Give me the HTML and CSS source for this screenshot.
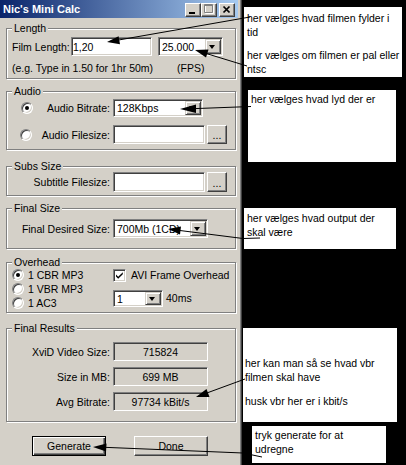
FILE: index.html
```html
<!DOCTYPE html>
<html lang="da">
<head>
    <meta charset="UTF-8">
    <meta name="viewport" content="width=device-width, initial-scale=1.0">
    <title>Nic's Mini Calc</title>
    <link rel="stylesheet" href="styles.css">
</head>
<body>
<div class="page">
    <div class="window">
        <div class="titlebar">
            <span class="title">Nic's Mini Calc</span>
            <div class="tbuttons">
                <span class="tbtn"><svg width="14" height="12" viewBox="0 0 14 12"><rect x="3" y="8" width="6" height="2" fill="#000"/></svg></span>
                <span class="tbtn"><svg width="14" height="12" viewBox="0 0 14 12"><g transform="translate(1 1)" fill="none" stroke="#fff"><path d="M2.5 0.5h8v8h-8z"/></g><g fill="none" stroke="#808080"><path d="M2.5 0.5h8v8h-8z M2 1.5h9"/></g></svg></span>
                <span class="tbtn close"><svg width="14" height="12" viewBox="0 0 14 12"><path d="M3.5 2.5l6 6M9.5 2.5l-6 6" stroke="#000" stroke-width="1.7"/></svg></span>
            </div>
        </div>

        <!-- Length -->
        <fieldset class="group g-length">
            <legend>Length</legend>
            <div class="len-row">
                <span class="len-label">Film Length:</span>
                <div class="field w-len">1,20</div>
                <div class="field combo w-fps"><span class="val">25.000</span><span class="drop"></span></div>
            </div>
            <div class="hint-row">
                <span class="hint-a">(e.g. Type in 1.50 for 1hr 50m)</span>
                <span>(FPS)</span>
            </div>
        </fieldset>

        <!-- Audio -->
        <fieldset class="group g-audio">
            <legend>Audio</legend>
            <div class="frow h18">
                <div class="lcol"><span class="radio on r-a1"></span><span class="ltext">Audio Bitrate:</span></div>
                <div class="field combo w90"><span class="val">128Kbps</span><span class="drop"></span></div>
            </div>
            <div class="frow h19 gap8">
                <div class="lcol"><span class="radio r-a2"></span><span class="ltext">Audio Filesize:</span></div>
                <div class="field w92"></div>
                <span class="btn dots">...</span>
            </div>
        </fieldset>

        <!-- Subs -->
        <fieldset class="group g-subs">
            <legend>Subs Size</legend>
            <div class="frow h20">
                <div class="lcol"><span class="ltext">Subtitle Filesize:</span></div>
                <div class="field w92"></div>
                <span class="btn dots">...</span>
            </div>
        </fieldset>

        <!-- Final Size -->
        <fieldset class="group g-final">
            <legend>Final Size</legend>
            <div class="frow h19">
                <div class="lcol"><span class="ltext">Final Desired Size:</span></div>
                <div class="field combo w95"><span class="val">700Mb (1CD)</span><span class="drop"></span></div>
            </div>
        </fieldset>

        <!-- Overhead -->
        <fieldset class="group g-over">
            <legend>Overhead</legend>
            <div class="over-grid">
                <div class="over-radios">
                    <div class="orow"><span class="radio on"></span><span>1 CBR MP3</span></div>
                    <div class="orow"><span class="radio"></span><span>1 VBR MP3</span></div>
                    <div class="orow"><span class="radio"></span><span>1 AC3</span></div>
                </div>
                <div class="over-right">
                    <div class="orow">
                        <span class="check"><svg width="9" height="9" viewBox="0 0 9 9"><path d="M1 3.5l2.2 2.3 4.6-4.6v2L3.2 7.8 1 5.5z" fill="#000"/></svg></span>
                        <span class="chk-text">AVI Frame Overhead</span>
                    </div>
                    <div class="ms-row">
                        <div class="field combo w50"><span class="val">1</span><span class="drop"></span></div>
                        <span class="ms">40ms</span>
                    </div>
                </div>
            </div>
        </fieldset>

        <!-- Final Results -->
        <fieldset class="group g-results">
            <legend>Final Results</legend>
            <div class="res-row">
                <span class="ltext">XviD Video Size:</span>
                <div class="field ro">715824</div>
            </div>
            <div class="res-row">
                <span class="ltext">Size in MB:</span>
                <div class="field ro">699 MB</div>
            </div>
            <div class="res-row">
                <span class="ltext">Avg Bitrate:</span>
                <div class="field ro">97734 kBit/s</div>
            </div>
        </fieldset>

        <div class="actions">
            <span class="btn push default">Generate</span>
            <span class="btn push">Done</span>
        </div>
    </div>

    <!-- noter -->
    <div class="note note-1">
        <p>her vælges hvad filmen fylder i<br>tid</p>
        <p class="next">her vælges om filmen er pal eller<br>ntsc</p>
    </div>
    <div class="note note-2"><p>her vælges hvad lyd der er</p></div>
    <div class="note note-3"><p>her vælges hvad output der<br>skal være</p></div>
    <div class="note note-4">
        <p>her kan man så se hvad vbr<br>filmen skal have</p>
        <p class="next2">husk vbr her er i kbit/s</p>
    </div>
    <div class="note note-5"><p>tryk generate for at<br>udregne</p></div>

    <svg class="arrows" width="406" height="465" viewBox="0 0 406 465">
        <g fill="none" stroke="#000" stroke-width="1">
            <polyline points="110,41.5 250,17"/>
            <polyline points="198,51 247,66"/>
            <polyline points="184,109 251,106.5"/>
            <polyline points="172,229.5 243,238.5 260,238"/>
            <polyline points="200,395.5 245,379"/>
            <polyline points="97,447 243,453 262,457"/>
        </g>
        <g fill="#000">
            <polygon points="107,42 120,44.2 118.6,36.2"/>
            <polygon points="195,50 206,57.5 208.5,49.5"/>
            <polygon points="180,109 196,113 196,104.5"/>
            <polygon points="168,229 180,234.5 181,226.5"/>
            <polygon points="196,397 209.5,397 206.5,389"/>
            <polygon points="93,447 106,451.5 106.5,443.5"/>
        </g>
    </svg>
</div>
</body>
</html>
```

FILE: styles.css
```css
body {
    margin: 0;
    background-color: #000000;
    font-family: "Liberation Sans", Arial, sans-serif;
    font-size: 10.5px;
    color: #000000;
}
.page {
    position: relative;
    width: 406px;
    height: 465px;
    overflow: hidden;
}
.window {
    width: 242px;
    height: 465px;
    box-sizing: border-box;
    background-color: #d4d0c8;
    border-right: 1px solid #404040;
    box-shadow: inset -1px 0 #808080;
    overflow: hidden;
}

/* title bar */
.titlebar {
    display: flex;
    justify-content: space-between;
    width: 238px;
    height: 18px;
    background: linear-gradient(to right, #0a246a, #a6caf0);
}
.title {
    color: #ffffff;
    font-weight: bold;
    font-size: 11px;
    line-height: 19px;
    padding-left: 3px;
}
.tbuttons {
    display: flex;
    align-items: flex-start;
    padding: 3px 3px 0 0;
}
.tbtn {
    display: block;
    width: 16px;
    height: 14px;
    box-sizing: border-box;
    background-color: #d4d0c8;
    border: 1px solid;
    border-color: #ffffff #404040 #404040 #ffffff;
    box-shadow: inset -1px -1px #808080;
}
.tbtn svg {
    display: block;
}
.tbtn.close {
    margin-left: 2px;
}

/* group boxes */
.group {
    margin: 0 0 0 6px;
    width: 230px;
    min-width: 0;
    box-sizing: border-box;
    padding: 0;
    border: 1px solid #808080;
    box-shadow: 1px 1px 0 #ffffff, inset 1px 1px 0 #ffffff;
}
.group legend {
    margin-left: 5px;
    padding: 0 2px;
    height: 12px;
    line-height: 12px;
    background-color: #d4d0c8;
}
.g-length { margin-top: 4px; padding: 3px 0 4px; }
.g-audio { margin-top: 6px; padding: 2px 0 5px; }
.g-subs { margin-top: 10px; padding: 0 0 3px; }
.g-final { margin-top: 6px; padding: 5px 0 10px; }
.g-over { margin-top: 7px; padding: 0 0 2px; }
.g-results { margin-top: 9px; padding: 8px 0 10px; }

/* controls */
.field {
    display: flex;
    align-items: center;
    box-sizing: border-box;
    height: 100%;
    background-color: #ffffff;
    border: 1px solid;
    border-color: #808080 #ffffff #ffffff #808080;
    box-shadow: inset 1px 1px #404040, inset -1px -1px #d4d0c8;
    padding-left: 2px;
    white-space: nowrap;
    overflow: hidden;
}
.combo {
    padding: 1px;
}
.combo .val {
    flex: 1;
    padding-left: 2px;
    overflow: hidden;
}
.drop {
    position: relative;
    flex: none;
    width: 16px;
    height: 100%;
    box-sizing: border-box;
    background-color: #d4d0c8;
    border: 1px solid;
    border-color: #d4d0c8 #404040 #404040 #d4d0c8;
    box-shadow: inset 1px 1px #ffffff, inset -1px -1px #808080;
}
.drop::after {
    content: "";
    position: absolute;
    left: 3px;
    top: 50%;
    margin-top: -2px;
    border-left: 3.5px solid transparent;
    border-right: 3.5px solid transparent;
    border-top: 4px solid #000000;
}
.btn {
    display: flex;
    align-items: center;
    justify-content: center;
    box-sizing: border-box;
    background-color: #d4d0c8;
    border: 1px solid;
    border-color: #ffffff #404040 #404040 #ffffff;
    box-shadow: inset -1px -1px #808080, inset 1px 1px #d4d0c8;
}
.btn.default {
    border-color: #000000;
    box-shadow: inset 1px 1px #ffffff, inset -1px -1px #404040, inset -2px -2px #808080;
}
.dots {
    width: 20px;
    height: 100%;
    margin-left: 2px;
    align-items: flex-end;
    padding-bottom: 4px;
    line-height: 8px;
}
.radio {
    position: relative;
    flex: none;
    display: block;
    width: 12px;
    height: 12px;
    box-sizing: border-box;
    border-radius: 50%;
    background-color: #ffffff;
    border: 1px solid;
    border-color: #808080 #ffffff #ffffff #808080;
    box-shadow: inset 1px 1px #404040, inset -1px -1px #d4d0c8;
}
.radio.on::after {
    content: "";
    position: absolute;
    left: 3px;
    top: 3px;
    width: 4px;
    height: 4px;
    border-radius: 50%;
    background-color: #000000;
}
.check {
    display: flex;
    align-items: center;
    justify-content: center;
    flex: none;
    width: 13px;
    height: 13px;
    box-sizing: border-box;
    background-color: #ffffff;
    border: 1px solid;
    border-color: #808080 #ffffff #ffffff #808080;
    box-shadow: inset 1px 1px #404040, inset -1px -1px #d4d0c8;
}
.check svg {
    display: block;
}

/* length rows */
.len-row {
    display: flex;
    align-items: center;
    height: 19px;
    padding-left: 5px;
}
.len-label {
    width: 59px;
}
.w-len { width: 81px; padding-left: 1px; }
.w-fps { width: 65px; margin-left: 6px; }
.hint-row {
    display: flex;
    height: 12px;
    line-height: 12px;
    margin-top: 6px;
    padding-left: 5px;
}
.hint-a {
    width: 165px;
}

/* label + control rows */
.frow {
    display: flex;
    align-items: center;
}
.h18 { height: 18px; }
.h19 { height: 19px; }
.h20 { height: 20px; }
.gap8 { margin-top: 8px; }
.lcol {
    display: flex;
    align-items: center;
    width: 103px;
    margin-right: 3px;
}
.ltext {
    margin-left: auto;
}
.r-a1 { margin-left: 14px; }
.r-a2 { margin-left: 13px; }
.w50 { width: 50px; }
.w90 { width: 90px; }
.w92 { width: 92px; }
.w95 { width: 95px; }

/* overhead */
.over-grid {
    display: grid;
    grid-template-columns: 106px auto;
}
.over-radios {
    padding-left: 5px;
}
.orow {
    display: flex;
    align-items: center;
    gap: 4px;
    height: 14px;
}
.chk-text {
    margin-left: 1px;
}
.ms-row {
    display: flex;
    align-items: center;
    height: 17px;
    margin-top: 8px;
}
.ms {
    margin-left: 3px;
    margin-top: -1px;
}

/* results */
.res-row {
    display: flex;
    align-items: center;
    height: 19px;
    margin-bottom: 6px;
}
.res-row:last-child {
    margin-bottom: 0;
}
.res-row .ltext {
    width: 103px;
    margin: 0 3px 0 0;
    text-align: right;
}
.ro {
    width: 95px;
    justify-content: center;
    padding-left: 0;
    background-color: #d4d0c8;
}

/* bottom buttons */
.actions {
    display: flex;
    margin-top: 14px;
    padding-left: 32px;
}
.push {
    width: 74px;
    height: 20px;
}
.push + .push {
    margin-left: 28px;
}

/* annotations */
.note {
    position: absolute;
    box-sizing: border-box;
    background-color: #ffffff;
    font-size: 10.5px;
    line-height: 14px;
}
.note p {
    margin: 0;
}
.note-1 { left: 244px; top: 7px; width: 158px; height: 70px; padding: 4px 0 0 3px; }
.note-1 .next { margin-top: 9px; }
.note-2 { left: 248px; top: 90px; width: 148px; height: 72px; padding: 2px 0 0 3px; }
.note-3 { left: 244px; top: 208px; width: 152px; height: 41px; padding: 3px 0 0 3px; }
.note-4 { left: 243px; top: 328px; width: 154px; height: 94px; padding: 28px 0 0 2px; }
.note-4 .next2 { margin-top: 10px; }
.note-5 { left: 252px; top: 426px; width: 134px; height: 37px; padding: 2px 0 0 3px; }

.arrows {
    position: absolute;
    left: 0;
    top: 0;
    pointer-events: none;
}
```
